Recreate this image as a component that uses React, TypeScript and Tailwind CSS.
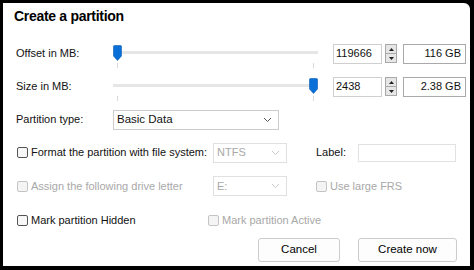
import React from "react";

const F = { fontFamily: '"Liberation Sans", Arial, sans-serif' };

function Chevron({ color = "#555" }: { color?: string }) {
  return (
    <svg width="9" height="6" viewBox="0 0 9 6">
      <path d="M1 1 L4.5 4.5 L8 1" fill="none" stroke={color} strokeWidth="1" />
    </svg>
  );
}

function Check({ disabled }: { disabled?: boolean }) {
  return (
    <div
      className={`w-[11px] h-[11px] rounded-[2px] border ${
        disabled ? "border-[#c4c4c4] bg-[#f4f4f4]" : "border-[#555] bg-[#f7f7f7]"
      }`}
    />
  );
}

function Slider({ pos }: { pos: "min" | "max" }) {
  return (
    <div className="w-[205px] h-full flex flex-col justify-center">
      <div className="relative h-[16px]">
        <div className="absolute left-0 right-0 top-[5px] h-[3px] bg-[#e6e6e6]" />
        <div className="absolute left-[4px] top-[17px] w-px h-[5px] bg-[#d8d8d8]" />
        <div className="absolute right-[4px] top-[17px] w-px h-[5px] bg-[#d8d8d8]" />
        <svg
          className={`absolute top-[-1px] ${pos === "min" ? "left-0" : "left-[196px]"}`}
          width="9"
          height="16"
          viewBox="0 0 9 16"
        >
          <path d="M0.5 1.5 Q0.5 0.5 1.5 0.5 L7.5 0.5 Q8.5 0.5 8.5 1.5 L8.5 11 L4.5 15.5 L0.5 11 Z" fill="#0a6fd6" stroke="#0a5cb8" strokeWidth="0.6" />
        </svg>
      </div>
    </div>
  );
}

function Spin() {
  return (
    <div className="w-[12px] h-[19px] border border-[#a9a9a9] bg-[#e6e6e6] flex flex-col">
      <div className="flex-1 flex items-center justify-center border-b border-[#a9a9a9]">
        <svg width="5" height="3" viewBox="0 0 5 3">
          <path d="M0 3 L2.5 0 L5 3 Z" fill="#222" />
        </svg>
      </div>
      <div className="flex-1 flex items-center justify-center">
        <svg width="5" height="3" viewBox="0 0 5 3">
          <path d="M0 0 L2.5 3 L5 0 Z" fill="#222" />
        </svg>
      </div>
    </div>
  );
}

function SizeRow({ label, pos, value, gb }: { label: string; pos: "min" | "max"; value: string; gb: string }) {
  return (
    <div className="h-[33px] flex items-center">
      <div className="w-[110px] pl-[13px]">{label}</div>
      <Slider pos={pos} />
      <div className="ml-[15px] w-[49px] h-[20px] border border-[#cfcfcf] bg-white flex items-center pl-[2px]">
        {value}
      </div>
      <div className="ml-[3px]">
        <Spin />
      </div>
      <div className="ml-[6px] w-[63px] h-[20px] border border-[#a9a9a9] bg-white flex items-center justify-end pr-[4px]">
        {gb}
      </div>
    </div>
  );
}

export default function App() {
  return (
    <div className="w-[474px] h-[270px] bg-black pt-[3px] pl-[3px] pr-[4px] pb-[4px]" style={F}>
      <div className="w-full h-full bg-white rounded-tr-[6px] flex flex-col text-[11px] text-[#111] leading-none">
        <div className="h-[34px] pl-[11px] pt-[6px] text-[14px] font-bold tracking-[-0.3px] text-black">
          Create a partition
        </div>
        <SizeRow label="Offset in MB:" pos="min" value="119666" gb="116 GB" />
        <SizeRow label="Size in MB:" pos="max" value="2438" gb="2.38 GB" />
        <div className="h-[33px] flex items-center">
          <div className="w-[110px] pl-[13px]">Partition type:</div>
          <div className="w-[166px] h-[20px] border border-[#cccccc] bg-white flex items-center justify-between pl-[3px] pr-[6px]">
            <span className="text-[11.5px]">Basic Data</span>
            <Chevron />
          </div>
        </div>
        <div className="h-[33px] flex items-center">
          <div className="w-[210px] pl-[14px] flex items-center gap-[3px]">
            <Check />
            <span>Format the partition with file system:</span>
          </div>
          <div className="w-[74px] h-[20px] border border-[#e0e0e0] bg-white flex items-center justify-between pl-[3px] pr-[6px] text-[#a8a8a8]">
            <span>NTFS</span>
            <Chevron color="#c8c8c8" />
          </div>
          <div className="ml-[29px] w-[42px]">Label:</div>
          <div className="w-[98px] h-[18px] border border-[#e2e2e2] bg-white" />
        </div>
        <div className="h-[34px] flex items-center text-[#a8a8a8]">
          <div className="w-[210px] pl-[14px] flex items-center gap-[3px]">
            <Check disabled />
            <span>Assign the following drive letter</span>
          </div>
          <div className="w-[74px] h-[20px] border border-[#e0e0e0] bg-white flex items-center justify-between pl-[3px] pr-[6px]">
            <span>E:</span>
            <Chevron color="#c8c8c8" />
          </div>
          <div className="ml-[29px] flex items-center gap-[3px]">
            <Check disabled />
            <span>Use large FRS</span>
          </div>
        </div>
        <div className="h-[34px] flex items-center">
          <div className="w-[205px] pl-[14px] flex items-center gap-[3px]">
            <Check />
            <span>Mark partition Hidden</span>
          </div>
          <div className="flex items-center gap-[3px] text-[#a8a8a8]">
            <Check disabled />
            <span>Mark partition Active</span>
          </div>
        </div>
        <div className="mt-[1px] flex justify-end gap-[18px] pr-[13px]">
          <button className="w-[82px] h-[24px] border border-[#cccccc] rounded-[3px] bg-[#fdfdfd] text-[11.5px] text-black">
            Cancel
          </button>
          <button className="w-[99px] h-[24px] border border-[#cccccc] rounded-[3px] bg-[#fdfdfd] text-[11.5px] text-black">
            Create now
          </button>
        </div>
      </div>
    </div>
  );
}
